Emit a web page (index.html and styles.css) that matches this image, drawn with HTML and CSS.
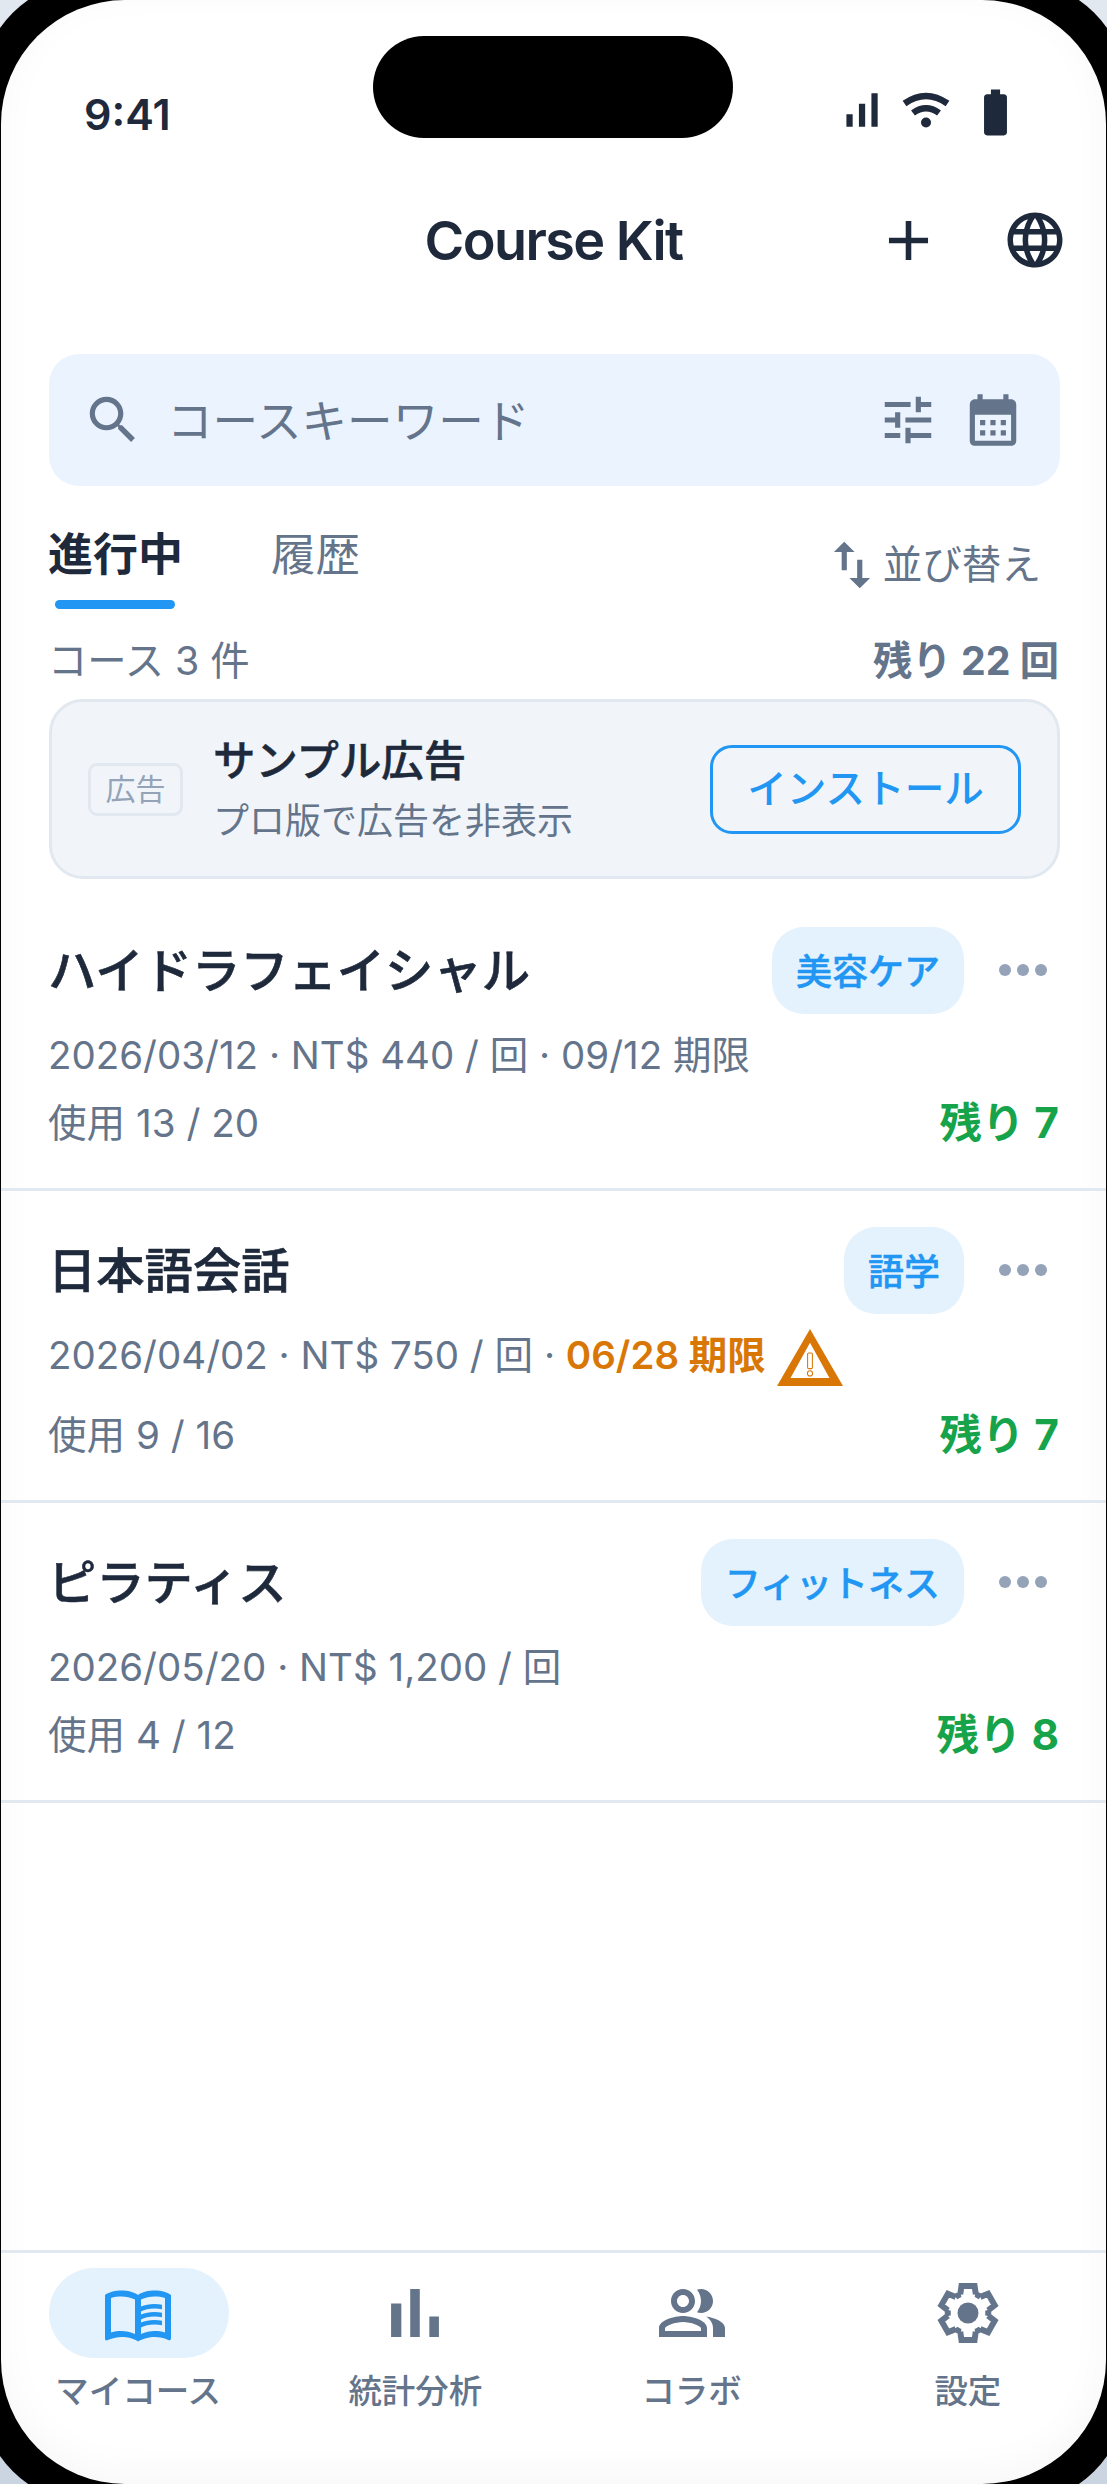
FILE: index.html
```html
<!DOCTYPE html>
<html lang="ja">
<head>
<meta charset="utf-8">
<title>Course Kit</title>
<link rel="stylesheet" href="styles.css">
</head>
<body>
<div class="device">
<div class="screen">
  <div class="island"></div>
  <header class="status">
    <span class="time">9:41</span>
    <div class="status-icons">
      <svg class="i50" viewBox="0 0 24 24"><path d="M17 4h3v16h-3zM5 14h3v6H5zm6-5h3v11h-3z"/></svg>
      <svg class="i50" viewBox="0 0 50 50"><path class="wifi-arc" d="M2.5 18.500Q24 3.500 45.500 18.500"/><path class="wifi-arc" d="M11 28Q24 18.500 37 28"/><circle cx="24" cy="37.500" r="5"/></svg>
      <svg class="i55" viewBox="0 0 24 24"><path d="M15.67 4H14V2h-4v2H8.33C7.6 4 7 4.6 7 5.33v15.33C7 21.4 7.6 22 8.33 22h7.33c.74 0 1.34-.6 1.34-1.33V5.33C17 4.6 16.4 4 15.67 4z"/></svg>
    </div>
  </header>
  <nav class="nav">
    <span></span>
    <h1 class="title">Course Kit</h1>
    <div class="nav-actions">
      <svg class="i67" viewBox="0 0 24 24"><path d="M19 13h-6v6h-2v-6H5v-2h6V5h2v6h6v2z"/></svg>
      <svg class="i66" viewBox="0 0 24 24"><path d="M11.99 2C6.47 2 2 6.48 2 12s4.47 10 9.99 10C17.52 22 22 17.52 22 12S17.52 2 11.99 2zm6.93 6h-2.95c-.32-1.25-.78-2.45-1.38-3.56 1.84.63 3.37 1.91 4.33 3.56zM12 4.04c.83 1.2 1.48 2.53 1.91 3.96h-3.82c.43-1.43 1.08-2.76 1.91-3.96zM4.26 14C4.1 13.36 4 12.69 4 12s.1-1.36.26-2h3.38c-.08.66-.14 1.32-.14 2 0 .68.06 1.34.14 2H4.26zm.82 2h2.95c.32 1.25.78 2.45 1.38 3.56-1.84-.63-3.37-1.9-4.33-3.56zm2.95-8H5.08c.96-1.66 2.49-2.93 4.33-3.56C8.81 5.55 8.35 6.75 8.03 8zM12 19.96c-.83-1.2-1.48-2.53-1.91-3.96h3.82c-.43 1.43-1.08 2.76-1.91 3.96zM14.34 14H9.66c-.09-.66-.16-1.32-.16-2 0-.68.07-1.35.16-2h4.68c.09.65.16 1.32.16 2 0 .68-.07 1.34-.16 2zm.25 5.56c.6-1.11 1.06-2.31 1.38-3.56h2.95c-.96 1.65-2.49 2.93-4.33 3.56zM16.36 14c.08-.66.14-1.32.14-2 0-.68-.06-1.34-.14-2h3.38c.16.64.26 1.31.26 2s-.1 1.36-.26 2h-3.38z"/></svg>
    </div>
  </nav>
  <div class="search">
    <svg class="i62 slate" viewBox="0 0 24 24"><path d="M15.5 14h-.79l-.28-.27C15.41 12.59 16 11.11 16 9.5 16 5.91 13.09 3 9.5 3S3 5.91 3 9.5 5.91 16 9.5 16c1.61 0 3.09-.59 4.23-1.57l.27.28v.79l5 4.99L20.49 19l-4.99-5zm-6 0C7.01 14 5 11.99 5 9.5S7.01 5 9.5 5 14 7.01 14 9.5 11.99 14 9.5 14z"/></svg>
    <span class="placeholder">コースキーワード</span>
    <svg class="i62 slate" viewBox="0 0 24 24"><path d="M3 17v2h6v-2H3zM3 5v2h10V5H3zm10 16v-2h8v-2h-8v-2h-2v6h2zM7 9v2H3v2h4v2h2V9H7zm14 4v-2H11v2h10zm-6-4h2V7h4V5h-4V3h-2v6z"/></svg>
    <svg class="i62 slate" viewBox="0 0 24 24"><path d="M19 4h-1V2h-2v2H8V2H6v2H5c-1.11 0-1.99.9-1.99 2L3 20c0 1.1.89 2 2 2h14c1.1 0 2-.9 2-2V6c0-1.1-.9-2-2-2zm0 16H5V10h14v10zM9 14H7v-2h2v2zm4 0h-2v-2h2v2zm4 0h-2v-2h2v2zm-8 4H7v-2h2v2zm4 0h-2v-2h2v2zm4 0h-2v-2h2v2z"/></svg>
  </div>
  <div class="tabs">
    <div class="tab active"><span>進行中</span><i class="indicator"></i></div>
    <div class="tab"><span>履歴</span></div>
    <div class="sort">
      <svg class="i62 slate" viewBox="0 0 24 24"><path d="M16 17.01V10h-2v7.01h-3L15 21l4-3.99h-3zM9 3L5 6.99h3V14h2V6.99h3L9 3z"/></svg>
      <span>並び替え</span>
    </div>
  </div>
  <div class="summary"><span>コース 3 件</span><strong>残り 22 回</strong></div>
  <aside class="ad">
    <span class="ad-tag">広告</span>
    <div class="ad-copy">
      <div class="ad-title">サンプル広告</div>
      <div class="ad-sub">プロ版で広告を非表示</div>
    </div>
    <button class="install">インストール</button>
  </aside>
  <section class="rows">
    <article class="row">
      <div class="row-head">
        <h2>ハイドラフェイシャル</h2>
        <span class="chip">美容ケア</span>
        <svg class="dots" viewBox="0 0 24 24"><circle cx="6" cy="12" r="2"/><circle cx="12" cy="12" r="2"/><circle cx="18" cy="12" r="2"/></svg>
      </div>
      <div class="meta">2026/03/12 · NT$ 440 / 回 · 09/12 期限</div>
      <div class="use"><span>使用 13 / 20</span><strong>残り 7</strong></div>
    </article>
    <article class="row">
      <div class="row-head">
        <h2>日本語会話</h2>
        <span class="chip">語学</span>
        <svg class="dots" viewBox="0 0 24 24"><circle cx="6" cy="12" r="2"/><circle cx="12" cy="12" r="2"/><circle cx="18" cy="12" r="2"/></svg>
      </div>
      <div class="meta warn-line">
        <span>2026/04/02 · NT$ 750 / 回 · <b class="due">06/28 期限</b></span>
        <svg class="warn" viewBox="0 0 24 24"><path d="M12 6.6L18.5 18.300H5.500L12 6.600M12 2L1 21h22L12 2z"/><rect class="warn-mark" x="11.200" y="10" width="1.600" height="5.200" rx=".4"/><circle class="warn-mark" cx="12" cy="16.800" r=".85"/></svg>
      </div>
      <div class="use"><span>使用 9 / 16</span><strong>残り 7</strong></div>
    </article>
    <article class="row">
      <div class="row-head">
        <h2>ピラティス</h2>
        <span class="chip">フィットネス</span>
        <svg class="dots" viewBox="0 0 24 24"><circle cx="6" cy="12" r="2"/><circle cx="12" cy="12" r="2"/><circle cx="18" cy="12" r="2"/></svg>
      </div>
      <div class="meta">2026/05/20 · NT$ 1,200 / 回</div>
      <div class="use"><span>使用 4 / 12</span><strong>残り 8</strong></div>
    </article>
  </section>
  <footer class="tabbar">
    <div class="tb-item on">
      <div class="tb-icon"><svg class="i72" viewBox="0 0 24 24"><path d="M21 5c-1.11-.35-2.33-.5-3.5-.5-1.95 0-4.05.4-5.5 1.5-1.45-1.1-3.55-1.5-5.5-1.5-1.95 0-4.05.4-5.5 1.5v14.65c0 .25.25.5.5.5.1 0 .15-.05.25-.05 1.35-.65 3.3-1.1 4.75-1.1 1.95 0 4.05.4 5.5 1.5 1.35-.85 3.8-1.5 5.5-1.5 1.65 0 3.35.3 4.75 1.05.1.05.15.05.25.05.25 0 .5-.25.5-.5V6c-.6-.45-1.25-.75-2-1zM3 18.500V7c1.100-.35 2.300-.5 3.500-.5 1.340 0 3.130.41 4.500.99v11.500C9.630 18.410 7.840 18 6.500 18c-1.200 0-2.400.15-3.500.5zm18 0c-1.100-.35-2.300-.5-3.500-.5-1.340 0-3.130.41-4.500.99V7.490c1.370-.59 3.160-.99 4.500-.99 1.200 0 2.400.15 3.500.5v11.500z"/><path d="M17.500 10.500c.88 0 1.730.09 2.500.26V9.240c-.79-.15-1.640-.24-2.500-.24-1.700 0-3.240.29-4.500.83v1.660c1.130-.64 2.700-.99 4.500-.99zM13 12.490v1.660c1.130-.64 2.700-.99 4.500-.99.88 0 1.730.09 2.500.26V11.900c-.79-.15-1.640-.24-2.500-.24-1.700 0-3.240.3-4.500.83zM17.500 14.330c-1.700 0-3.240.29-4.500.83v1.660c1.130-.64 2.700-.99 4.500-.99.88 0 1.730.09 2.500.26v-1.520c-.79-.16-1.640-.24-2.500-.24z"/></svg></div>
      <span>マイコース</span>
    </div>
    <div class="tb-item">
      <div class="tb-icon"><svg class="i82" viewBox="0 0 24 24"><path d="M5 9.2h3V19H5zM10.6 5h2.8v14h-2.8zm5.6 8H19v6h-2.8z"/></svg></div>
      <span>統計分析</span>
    </div>
    <div class="tb-item">
      <div class="tb-icon"><svg class="i72" viewBox="0 0 24 24"><path d="M16.67 13.13C18.04 14.06 19 15.32 19 17v3h4v-3c0-2.18-3.57-3.47-6.33-3.87z"/><path d="M15 12c2.21 0 4-1.79 4-4s-1.79-4-4-4c-.47 0-.91.1-1.33.24C14.5 5.27 15 6.58 15 8s-.5 2.73-1.33 3.76c.42.14.86.24 1.33.24z"/><path d="M9 12c2.21 0 4-1.79 4-4s-1.79-4-4-4-4 1.79-4 4 1.79 4 4 4zm0-6c1.1 0 2 .9 2 2s-.9 2-2 2-2-.9-2-2 .9-2 2-2z"/><path d="M9 13c-2.67 0-8 1.34-8 4v3h16v-3c0-2.66-5.33-4-8-4zm6 5H3v-.99C3.2 16.29 6.3 15 9 15s5.8 1.29 6 2v1z"/></svg></div>
      <span>コラボ</span>
    </div>
    <div class="tb-item">
      <div class="tb-icon"><svg class="i72" viewBox="0 0 24 24"><path class="gear" d="M19.44 12.99l-.01.02c.04-.33.08-.67.08-1.01 0-.34-.03-.66-.07-.99l.01.02 2.44-1.92-2.43-4.22-2.87 1.16.01.01c-.52-.4-1.09-.74-1.71-1h.01L14.44 2H9.57l-.44 3.07h.01c-.62.26-1.19.61-1.71 1l.01-.01-2.88-1.17-2.44 4.22 2.44 1.92.01-.02c-.04.33-.07.65-.07.99 0 .34.03.68.08 1.01l-.01-.02-2.44 1.92 2.43 4.2 2.89-1.15-.02-.04c.53.41 1.1.75 1.73 1.01h-.03L9.58 22h4.85l.44-3.07h-.01c.62-.26 1.2-.6 1.73-1.01l-.02.04 2.89 1.15 2.43-4.2-2.45-1.92z"/><circle cx="12" cy="12" r="3.5"/></svg></div>
      <span>設定</span>
    </div>
  </footer>
</div>
</div>
</body>
</html>
```
FILE: styles.css
```css
* { box-sizing: border-box; }
html, body { margin: 0; padding: 0; height: 2484px; overflow: hidden; }
body {
  background: linear-gradient(180deg, #e2e8f0 0%, #cbd5e1 100%);
  font-family: Inter, "Noto Sans CJK JP", sans-serif;
  color: #1e293b;
}
svg { display: block; flex: none; fill: currentColor; }
.i50 { width: 50px; height: 50px; }
.i55 { width: 55px; height: 55px; }
.i62 { width: 62px; height: 62px; }
.i66 { width: 66px; height: 66px; }
.i67 { width: 67px; height: 67px; }
.i72 { width: 72px; height: 72px; }
.i82 { width: 82px; height: 82px; }
.slate { color: #64748b; }

.device {
  width: 1147px;
  height: 2524px;
  margin: -20px;
  padding: 20px 21px;
  background: #000;
  border-radius: 112px;
}
.screen {
  position: relative;
  width: 1105px;
  height: 2484px;
  background: #fff;
  border-radius: 124px;
  overflow: hidden;
  display: flex;
  flex-direction: column;
  box-shadow: inset 0 -10px 40px rgba(15, 23, 42, .035);
}
.island {
  position: absolute;
  left: 372px;
  top: 36px;
  width: 360px;
  height: 102px;
  border-radius: 51px;
  background: #000;
}

.status {
  height: 170px;
  padding: 89px 83px 0 83px;
  display: flex;
  justify-content: space-between;
  align-items: flex-start;
}
.time { font-size: 43px; line-height: 50px; font-weight: 600; }
.status-icons { display: flex; gap: 16px; margin-top: -4px; }

.nav {
  height: 140px;
  padding: 0 38px 0 38px;
  display: grid;
  grid-template-columns: 1fr auto 1fr;
  align-items: center;
}
.title { margin: 2px 0 0; font-size: 54px; line-height: 64px; font-weight: 600; letter-spacing: -1.6px; }
.nav-actions { display: flex; justify-content: flex-end; align-items: center; gap: 60px; }

.search {
  margin: 44px 46px 0 48px;
  height: 132px;
  padding: 0 36px 0 33px;
  display: flex;
  align-items: center;
  gap: 23px;
  background: #ebf3fe;
  border-radius: 30px;
}
.placeholder { flex: 1; padding-top: 3px; font-size: 45.6px; line-height: 62px; color: #64748b; }

.tabs {
  margin: 38px 47px 0;
  display: flex;
  align-items: flex-start;
  gap: 88px;
}
.tab { font-size: 44.5px; line-height: 62px; color: #64748b; }
.tab.active { font-size: 45px; color: #1e293b; font-weight: 700; }
.tab span { display: block; }
.indicator {
  display: block;
  width: 120px;
  height: 9px;
  margin: 14px 0 0 7px;
  border-radius: 5px;
  background: #2196f3;
}
.sort {
  margin: 10px 18px 0 auto;
  display: flex;
  align-items: center;
  font-size: 39.6px;
  line-height: 60px;
  color: #64748b;
}

.summary {
  margin: 28px 47px 0;
  display: flex;
  justify-content: space-between;
  font-size: 39.3px;
  line-height: 48px;
  color: #64748b;
}
.summary strong { font-weight: 700; }

.ad {
  margin: 14px 46px 0 48px;
  height: 180px;
  padding: 0 36px 0 36px;
  display: flex;
  align-items: center;
  background: #f1f5f9;
  border: 3px solid #e2e8f0;
  border-radius: 34px;
}
.ad-tag {
  width: 95px;
  height: 53px;
  border: 3px solid #e2e8f0;
  border-radius: 9px;
  font-size: 30px;
  line-height: 47px;
  text-align: center;
  color: #94a3b8;
}
.ad-copy { flex: 1; margin-left: 30px; padding-top: 4px; }
.ad-title { font-size: 42.4px; line-height: 60px; font-weight: 500; -webkit-text-stroke: .5px currentColor; }
.ad-sub { font-size: 36px; line-height: 60px; color: #64748b; }
.install {
  width: 311px;
  height: 89px;
  padding: 2px 0 0;
  background: transparent;
  border: 3px solid #2196f3;
  border-radius: 22px;
  font: 500 39.6px/1 Inter, "Noto Sans CJK JP", sans-serif;
  color: #2196f3;
}

.rows { margin-top: 12px; }
.row { padding: 36px 47px 35px 47px; border-bottom: 3px solid #e2e8f0; }
.row-head { display: flex; align-items: center; }
.row-head h2 { margin: 0 auto 0 0; font-size: 48.3px; line-height: 60px; font-weight: 500; -webkit-text-stroke: .6px currentColor; }
.chip {
  height: 87px;
  padding: 0 24px;
  border-radius: 32px;
  background: #e3f2fd;
  color: #2196f3;
  font-size: 36px;
  line-height: 90px;
  font-weight: 500;
  -webkit-text-stroke: .4px currentColor;
}
.dots { width: 72px; height: 72px; margin: -2px 0 0 23px; color: #94a3b8; }
.meta { margin-top: 12px; font-size: 38.5px; line-height: 58px; color: #64748b; }
.warn-line { display: flex; align-items: flex-start; height: 70px; }
.due { font-weight: 600; color: #d97706; }
.warn { width: 72px; height: 72px; margin: -3px 0 0 8px; color: #d97706; }
.warn-mark { fill: none; stroke: currentColor; stroke-width: .35; }
.use {
  margin-top: 9px;
  display: flex;
  justify-content: space-between;
  font-size: 38.6px;
  line-height: 60px;
  color: #64748b;
}
.use strong { font-size: 42.4px; font-weight: 700; color: #16a34a; }

.tabbar {
  margin-top: auto;
  height: 234px;
  padding-top: 15px;
  border-top: 3px solid #e2e8f0;
  display: grid;
  grid-template-columns: repeat(4, 1fr);
}
.tb-item {
  display: flex;
  flex-direction: column;
  align-items: center;
  font-size: 33.5px;
  line-height: 44px;
  font-weight: 500;
  color: #64748b;
}
.tb-icon {
  width: 180px;
  height: 90px;
  margin-bottom: 11px;
  border-radius: 45px;
  display: flex;
  align-items: center;
  justify-content: center;
}
.tb-item.on .tb-icon { padding-right: 2px; background: #e3f2fd; color: #2196f3; }
.tb-item.on span { margin-right: 2px; }
.gear { fill: none; stroke: currentColor; stroke-width: 2.2; transform: scale(.9); transform-origin: 12px 12px; }
.wifi-arc { fill: none; stroke: currentColor; stroke-width: 6.5; }
```
